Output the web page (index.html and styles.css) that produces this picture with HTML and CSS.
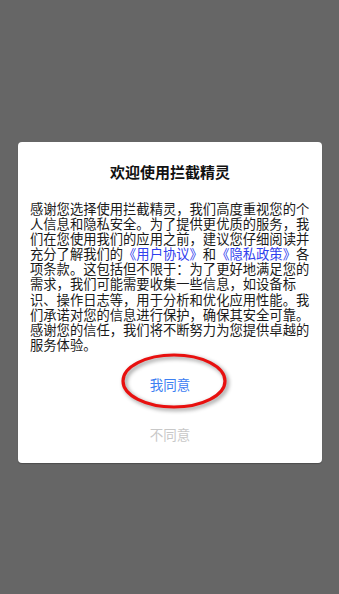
FILE: index.html
```html
<!doctype html>
<html lang="zh-CN">

<head>
	<meta charset="UTF-8">
	<meta name="viewport" content="width=device-width, initial-scale=1">
	<title>欢迎使用拦截精灵</title>
	<link rel="stylesheet" href="styles.css">
</head>

<body>
	<div class="Dialog">
		<div class="Title">欢迎使用拦截精灵</div>
		<p class="Message">感谢您选择使用拦截精灵，我们高度重视您的个人信息和隐私安全。为了提供更优质的服务，我们在您使用我们的应用之前，建议您仔细阅读并充分了解我们的<a href="#" class="Link">《用户协议》</a>和<a href="#" class="Link">《隐私政策》</a>各项条款。这包括但不限于：为了更好地满足您的需求，我们可能需要收集一些信息，如设备标识、操作日志等，用于分析和优化应用性能。我们承诺对您的信息进行保护，确保其安全可靠。感谢您的信任，我们将不断努力为您提供卓越的服务体验。</p>
		<div class="Agree">
			<span class="Button Ok">我同意</span>
			<svg class="Mark" width="116" height="66" viewBox="0 0 116 66">
				<ellipse cx="57" cy="31" rx="51" ry="26" fill="none" stroke="#e8100f" stroke-width="3.2" />
			</svg>
		</div>
		<div class="Disagree">
			<span class="Button Cancel">不同意</span>
		</div>
	</div>
</body>

</html>
```

FILE: styles.css
```css
html,
body {
	margin: 0;
	padding: 0;
}

body {
	background-color: #666666;
	height: 594px;
	overflow: hidden;
	font-family: "Noto Sans CJK SC", "Noto Sans", sans-serif;
}

div.Dialog {
	width: 304px;
	height: 321px;
	margin: 142px 0 0 18px;
	padding: 20px 0 0 0;
	box-sizing: border-box;
	background-color: white;
	border-radius: 4px;
	box-shadow: 0 1px 1px rgba(0, 0, 0, 0.25);
}

div.Title {
	font-size: 15px;
	font-weight: bold;
	line-height: 20px;
	text-align: center;
	color: #111111;
}

p.Message {
	width: 280px;
	margin: 19px 0 0 12px;
	font-size: 13.3px;
	line-height: 15.1px;
	color: #1a1a1a;
	word-break: break-all;
}

a.Link {
	color: #3040ee;
	text-decoration: none;
}

div.Agree,
div.Disagree {
	position: relative;
	text-align: center;
	line-height: 20px;
}

div.Agree {
	margin-top: 21px;
}

div.Disagree {
	margin-top: 29px;
}

span.Button {
	font-size: 13.5px;
}

span.Ok {
	color: #3d80f2;
}

span.Cancel {
	color: #c8c8c8;
}

svg.Mark {
	position: absolute;
	left: 99px;
	top: -23px;
	filter: drop-shadow(2px 2px 2px rgba(0, 0, 0, 0.45));
}
```
